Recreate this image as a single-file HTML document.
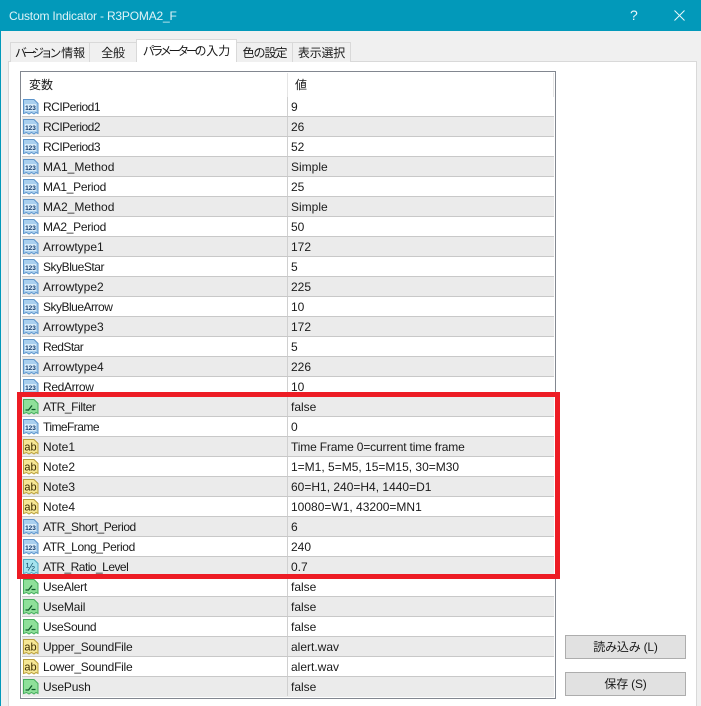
<!DOCTYPE html>
<html lang="ja">
<head>
<meta charset="utf-8">
<title>Custom Indicator - R3POMA2_F</title>
<style>
html,body{margin:0;padding:0;height:706px;overflow:hidden}
body{width:701px;position:relative;background:#f0f0f0;font:12px "Liberation Sans","Noto Sans CJK JP",sans-serif;color:#1a1a1a}
div,span,svg{position:absolute;box-sizing:border-box}
em{font-style:normal}
#edge{left:0;top:0;width:1px;height:706px;background:#0299ba}
#bar{left:0;top:0;width:701px;height:31px;background:#0299ba;color:#dff3f7}
#ttl{left:9px;top:8px;font-size:12px;letter-spacing:-.18px;line-height:16px;white-space:nowrap}
#panel{left:8px;top:61px;width:689px;height:645px;background:#fff;border:1px solid #d9d9d9;border-bottom:0}
.tab{top:42px;height:20px;background:#f0f0f0;border:1px solid #d9d9d9;border-bottom:0;text-align:center;line-height:20px;white-space:nowrap}
.tab.on{top:39px;height:23px;background:#fff;line-height:22px;z-index:2}
.k{letter-spacing:-3.3px;margin-right:3px}
#tbl{left:20px;top:71px;width:536px;height:628px;background:#fff;border:1px solid #828790}
.hd{top:5px;line-height:16px;white-space:nowrap}
.vs{top:1px;width:1px;height:24px;background:#e5e5e5}
#rows{left:1px;top:25px;width:532px}
.r{position:relative;display:block;height:20px;border-bottom:1px solid #c8c8c8;background:#fff}
.r.g{background:#ebebeb}
.r b{position:absolute;left:265px;top:0;width:1px;height:19px;background:#d0d0d0}
.r i{position:absolute;font-style:normal;left:21px;top:2px;line-height:16px;white-space:nowrap}
.r u{position:absolute;text-decoration:none;left:269px;top:2px;line-height:16px;white-space:nowrap}
.r svg{left:0;top:1px;width:17px;height:18px}
.n{font:bold 6.500px "Liberation Sans",sans-serif;text-anchor:middle;fill:#123a6b}
.a{font:11px "Liberation Sans",sans-serif;text-anchor:middle;fill:#3a2c00}
.h{font:11px "Liberation Sans",sans-serif;text-anchor:middle;fill:#14506b}
#red{left:17px;top:392px;width:543px;height:187px;border:5px solid #ed1c24;z-index:5}
.btn{left:565px;width:121px;height:24px;background:#e1e1e1;border:1px solid #adadad;text-align:center;line-height:23px;white-space:nowrap;letter-spacing:-.2px}
</style>
</head>
<body>
<svg width="0" height="0" style="left:0;top:0">
<defs>
<symbol id="b" viewBox="0 0 17 18"><path d="M1.500 1.500H12L16 5.500V15.500L14 14.500 12 16 9.500 14.500 7 16 4.500 14.500 1.500 15.500Z" fill="#a9cfee" stroke="#5c94cb"/><rect x="3" y="6" width="11" height="7" fill="#d9ecfa"/></symbol>
<symbol id="v" viewBox="0 0 17 18"><path d="M1.500 1.500H12L16 5.500V15.500L14 14.500 12 16 9.500 14.500 7 16 4.500 14.500 1.500 15.500Z" fill="#8fe09a" stroke="#45ad5c"/><path d="M3.500 12H6.500L10 7.500M9.500 11.500H13.500" fill="none" stroke="#0f5a2a" stroke-width="1.300"/></symbol>
<symbol id="y" viewBox="0 0 17 18"><path d="M1.500 1.500H12L16 5.500V15.500L14 14.500 12 16 9.500 14.500 7 16 4.500 14.500 1.500 15.500Z" fill="#f6e795" stroke="#b89f3c"/></symbol>
<symbol id="c" viewBox="0 0 17 18"><path d="M1.500 1.500H12L16 5.500V15.500L14 14.500 12 16 9.500 14.500 7 16 4.500 14.500 1.500 15.500Z" fill="#a5e3ee" stroke="#4fa9c4"/></symbol>
</defs>
</svg>
<div id="panel"></div>
<div id="bar"><div id="ttl">Custom Indicator - R3POMA2_F</div>
<svg style="left:630px;top:7px" width="60" height="18"><text x="0" y="13" style="font:14px 'Liberation Sans',sans-serif;fill:#eaf8fb">?</text><path d="M44.500 3.500L54.500 13.500M54.500 3.500L44.500 13.500" stroke="#eaf8fb" stroke-width="1" fill="none"/></svg>
</div>
<div id="edge"></div>
<div class="tab" style="left:10px;width:80px"><em class="k">バージョン</em>情報</div>
<div class="tab" style="left:89px;width:48px;letter-spacing:-.2px">全般</div>
<div class="tab on" style="left:136px;width:101px"><em class="k">パラメーターの</em>入力</div>
<div class="tab" style="left:236px;width:57px;letter-spacing:-1px">色の設定</div>
<div class="tab" style="left:292px;width:59px;letter-spacing:-.2px">表示選択</div>
<div id="tbl">
<div class="hd" style="left:8px">変数</div>
<div class="hd" style="left:274px">値</div>
<div class="vs" style="left:266px"></div>
<div class="vs" style="left:532px"></div>
<div id="rows">
<div class="r"><svg viewBox="0 0 17 18"><use href="#b"/><text class="n" x="8.500" y="12">123</text></svg><i style="letter-spacing:-.5px">RCIPeriod1</i><b></b><u>9</u></div>
<div class="r g"><svg viewBox="0 0 17 18"><use href="#b"/><text class="n" x="8.500" y="12">123</text></svg><i style="letter-spacing:-.5px">RCIPeriod2</i><b></b><u>26</u></div>
<div class="r"><svg viewBox="0 0 17 18"><use href="#b"/><text class="n" x="8.500" y="12">123</text></svg><i style="letter-spacing:-.5px">RCIPeriod3</i><b></b><u>52</u></div>
<div class="r g"><svg viewBox="0 0 17 18"><use href="#b"/><text class="n" x="8.500" y="12">123</text></svg><i>MA1_Method</i><b></b><u>Simple</u></div>
<div class="r"><svg viewBox="0 0 17 18"><use href="#b"/><text class="n" x="8.500" y="12">123</text></svg><i style="letter-spacing:-.3px">MA1_Period</i><b></b><u>25</u></div>
<div class="r g"><svg viewBox="0 0 17 18"><use href="#b"/><text class="n" x="8.500" y="12">123</text></svg><i>MA2_Method</i><b></b><u>Simple</u></div>
<div class="r"><svg viewBox="0 0 17 18"><use href="#b"/><text class="n" x="8.500" y="12">123</text></svg><i style="letter-spacing:-.3px">MA2_Period</i><b></b><u>50</u></div>
<div class="r g"><svg viewBox="0 0 17 18"><use href="#b"/><text class="n" x="8.500" y="12">123</text></svg><i>Arrowtype1</i><b></b><u>172</u></div>
<div class="r"><svg viewBox="0 0 17 18"><use href="#b"/><text class="n" x="8.500" y="12">123</text></svg><i style="letter-spacing:-.45px">SkyBlueStar</i><b></b><u>5</u></div>
<div class="r g"><svg viewBox="0 0 17 18"><use href="#b"/><text class="n" x="8.500" y="12">123</text></svg><i>Arrowtype2</i><b></b><u>225</u></div>
<div class="r"><svg viewBox="0 0 17 18"><use href="#b"/><text class="n" x="8.500" y="12">123</text></svg><i style="letter-spacing:-.5px">SkyBlueArrow</i><b></b><u>10</u></div>
<div class="r g"><svg viewBox="0 0 17 18"><use href="#b"/><text class="n" x="8.500" y="12">123</text></svg><i>Arrowtype3</i><b></b><u>172</u></div>
<div class="r"><svg viewBox="0 0 17 18"><use href="#b"/><text class="n" x="8.500" y="12">123</text></svg><i style="letter-spacing:-.55px">RedStar</i><b></b><u>5</u></div>
<div class="r g"><svg viewBox="0 0 17 18"><use href="#b"/><text class="n" x="8.500" y="12">123</text></svg><i>Arrowtype4</i><b></b><u>226</u></div>
<div class="r"><svg viewBox="0 0 17 18"><use href="#b"/><text class="n" x="8.500" y="12">123</text></svg><i style="letter-spacing:-.35px">RedArrow</i><b></b><u>10</u></div>
<div class="r g"><svg viewBox="0 0 17 18"><use href="#v"/></svg><i style="letter-spacing:-.4px">ATR_Filter</i><b></b><u>false</u></div>
<div class="r"><svg viewBox="0 0 17 18"><use href="#b"/><text class="n" x="8.500" y="12">123</text></svg><i style="letter-spacing:-.55px">TimeFrame</i><b></b><u>0</u></div>
<div class="r g"><svg viewBox="0 0 17 18"><use href="#y"/><text class="a" x="8.500" y="12.500">ab</text></svg><i>Note1</i><b></b><u style="letter-spacing:-.16px">Time Frame 0=current time frame</u></div>
<div class="r"><svg viewBox="0 0 17 18"><use href="#y"/><text class="a" x="8.500" y="12.500">ab</text></svg><i>Note2</i><b></b><u>1=M1, 5=M5, 15=M15, 30=M30</u></div>
<div class="r g"><svg viewBox="0 0 17 18"><use href="#y"/><text class="a" x="8.500" y="12.500">ab</text></svg><i>Note3</i><b></b><u>60=H1, 240=H4, 1440=D1</u></div>
<div class="r"><svg viewBox="0 0 17 18"><use href="#y"/><text class="a" x="8.500" y="12.500">ab</text></svg><i>Note4</i><b></b><u>10080=W1, 43200=MN1</u></div>
<div class="r g"><svg viewBox="0 0 17 18"><use href="#b"/><text class="n" x="8.500" y="12">123</text></svg><i style="letter-spacing:-.44px">ATR_Short_Period</i><b></b><u>6</u></div>
<div class="r"><svg viewBox="0 0 17 18"><use href="#b"/><text class="n" x="8.500" y="12">123</text></svg><i style="letter-spacing:-.4px">ATR_Long_Period</i><b></b><u>240</u></div>
<div class="r g"><svg viewBox="0 0 17 18"><use href="#c"/><text class="h" x="8.500" y="12.500">½</text></svg><i style="letter-spacing:-.53px">ATR_Ratio_Level</i><b></b><u>0.7</u></div>
<div class="r"><svg viewBox="0 0 17 18"><use href="#v"/></svg><i style="letter-spacing:-.25px">UseAlert</i><b></b><u>false</u></div>
<div class="r g"><svg viewBox="0 0 17 18"><use href="#v"/></svg><i style="letter-spacing:-.15px">UseMail</i><b></b><u>false</u></div>
<div class="r"><svg viewBox="0 0 17 18"><use href="#v"/></svg><i style="letter-spacing:-.35px">UseSound</i><b></b><u>false</u></div>
<div class="r g"><svg viewBox="0 0 17 18"><use href="#y"/><text class="a" x="8.500" y="12.500">ab</text></svg><i style="letter-spacing:-.27px">Upper_SoundFile</i><b></b><u>alert.wav</u></div>
<div class="r"><svg viewBox="0 0 17 18"><use href="#y"/><text class="a" x="8.500" y="12.500">ab</text></svg><i style="letter-spacing:-.27px">Lower_SoundFile</i><b></b><u>alert.wav</u></div>
<div class="r g" style="border-bottom:0"><svg viewBox="0 0 17 18"><use href="#v"/></svg><i style="letter-spacing:-.15px">UsePush</i><b></b><u>false</u></div>
</div>
</div>
<div id="red"></div>
<div class="btn" style="top:635px">読み込み (L)</div>
<div class="btn" style="top:672px">保存 (S)</div>
</body>
</html>
